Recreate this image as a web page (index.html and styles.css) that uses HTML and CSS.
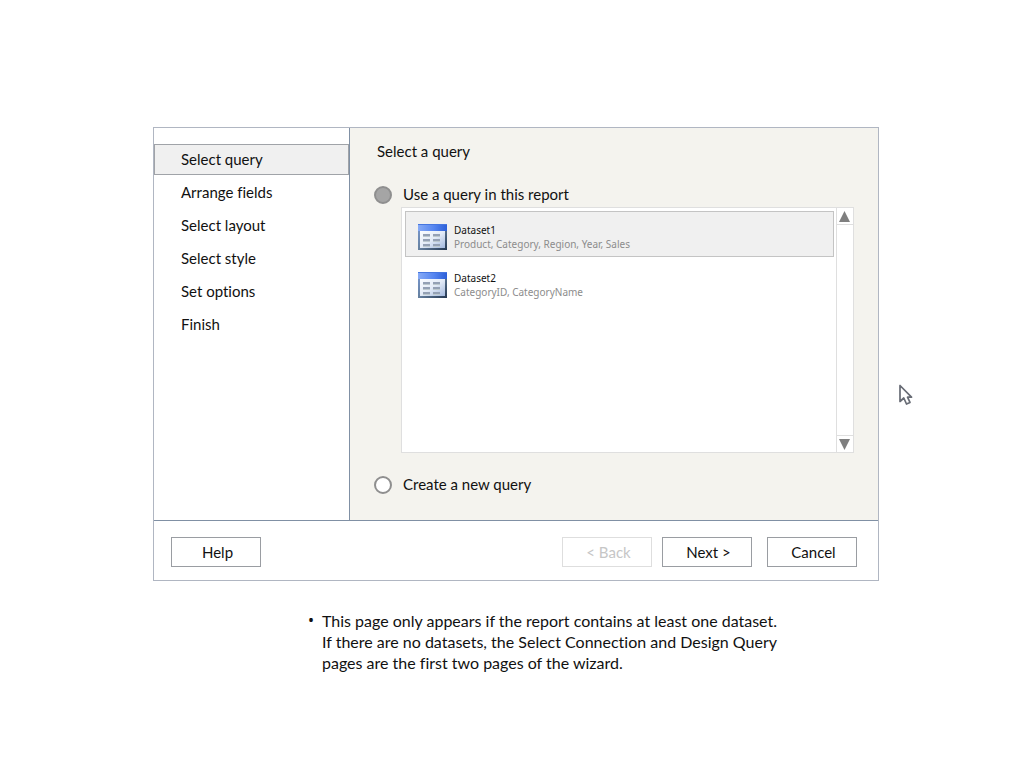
FILE: index.html
```html
<!DOCTYPE html>
<html lang="en">
<head>
<meta charset="utf-8">
<meta name="viewport" content="width=device-width, initial-scale=1">
<title>Report wizard</title>
<link rel="stylesheet" href="styles.css">
</head>
<body>
<svg class="defs" width="0" height="0" aria-hidden="true">
  <defs>
    <linearGradient id="head" x1="0" x2="1"><stop offset="0" stop-color="#86aaf6"/><stop offset=".55" stop-color="#5585f0"/><stop offset="1" stop-color="#2c5fd8"/></linearGradient>
    <linearGradient id="body" x1="0" x2="1" y1="0" y2="1"><stop offset="0" stop-color="#fbfdff"/><stop offset=".5" stop-color="#e3ebf7"/><stop offset="1" stop-color="#a2b8de"/></linearGradient>
    <linearGradient id="edge" x1="0" x2="1" y1="0" y2="1"><stop offset="0" stop-color="#7a9ad6"/><stop offset=".5" stop-color="#65809f"/><stop offset="1" stop-color="#23364f"/></linearGradient>
    <symbol id="table" viewBox="0 0 29 26">
      <rect width="29" height="26" fill="url(#edge)"/>
      <rect width="29" height="7" fill="url(#head)"/>
      <path d="M0 .5h29" stroke="#4676e0"/>
      <rect x="2" y="7" width="25" height="17" fill="url(#body)"/>
      <path d="M5 11h7M15 11h7M5 16h7M15 16h7M5 21h7M15 21h7" stroke="#94a1b5" stroke-width="2"/>
      <path d="M5 12.500h7M15 12.500h7M5 17.500h7M15 17.500h7M5 22.500h7M15 22.500h7" stroke="#bdc9ce" stroke-width="1"/>
    </symbol>
  </defs>
</svg>
<main class="page">
  <form class="wizard">
    <div class="content">
      <nav class="steps">
        <a class="step current" href="#query" aria-current="step">Select query</a>
        <a class="step" href="#fields">Arrange fields</a>
        <a class="step" href="#layout">Select layout</a>
        <a class="step" href="#style">Select style</a>
        <a class="step" href="#options">Set options</a>
        <a class="step" href="#finish">Finish</a>
      </nav>
      <section class="panel">
        <h1 class="title">Select a query</h1>
        <label class="choice"><input class="radio" type="radio" name="source" checked>Use a query in this report</label>
        <div class="list">
          <ul class="items">
            <li class="item selected">
              <svg class="icon" width="29" height="26" aria-hidden="true"><use href="#table"/></svg>
              <div class="text"><div class="name">Dataset1</div><div class="fields">Product, Category, Region, Year, Sales</div></div>
            </li>
            <li class="item">
              <svg class="icon" width="29" height="26" aria-hidden="true"><use href="#table"/></svg>
              <div class="text"><div class="name">Dataset2</div><div class="fields">CategoryID, CategoryName</div></div>
            </li>
          </ul>
          <div class="scrollbar">
            <button class="arrow up" type="button" aria-label="Scroll up"><svg width="12" height="11"><path d="M5.500 0L11 11H0z" fill="#7f7f7f"/></svg></button>
            <button class="arrow down" type="button" aria-label="Scroll down"><svg width="12" height="11"><path d="M0 0h11L5.500 11z" fill="#7f7f7f"/></svg></button>
          </div>
        </div>
        <label class="choice"><input class="radio" type="radio" name="source">Create a new query</label>
      </section>
    </div>
    <footer class="footer">
      <button class="button help" type="button">Help</button>
      <button class="button" type="button" disabled>&lt; Back</button>
      <button class="button" type="button">Next &gt;</button>
      <button class="button cancel" type="button">Cancel</button>
    </footer>
  </form>
  <ul class="notes">
    <li>This page only appears if the report contains at least one dataset.<br>If there are no datasets, the Select Connection and Design Query<br>pages are the first two pages of the wizard.</li>
  </ul>
</main>
<svg class="cursor" width="16" height="22" viewBox="0 0 16 22" aria-hidden="true"><path d="M2 1.500v16l3.800-3.500 2.700 6 3.500-1.600-2.500-5.200h4z" fill="#fff" stroke="#686c75" stroke-width="1.700" stroke-linejoin="round"/></svg>
</body>
</html>
```
FILE: styles.css
```css
* { box-sizing: border-box; }

body {
  margin: 0;
  background: #fff;
  color: #111;
  font: 15px/20px Lato, "Open Sans", sans-serif;
  font-variant-ligatures: none;
}

ul { margin: 0; padding: 0; }

.defs { position: absolute; }

.page { padding: 127px 145px 40px 153px; }

.wizard { border: 1px solid #b0b6c2; }

.content {
  display: grid;
  grid-template-columns: 196px 1fr;
  border-bottom: 1px solid #8090a4;
}

.steps {
  display: flex;
  flex-direction: column;
  gap: 2px;
  padding-top: 16px;
  border-right: 1px solid #8090a4;
}

.step {
  padding: 5px 26px;
  border: 1px solid transparent;
  color: inherit;
  line-height: 19px;
  text-decoration: none;
}

.step.current {
  border-color: #a0a3a8;
  background: #f0f0f0;
}

.panel {
  padding: 13px 24px 25px;
  background: #f4f3ee;
}

.title {
  margin: 0 0 22px 3px;
  font-size: 15px;
  font-weight: 400;
}

.choice {
  display: flex;
  align-items: center;
  gap: 11px;
  height: 22px;
}

.radio {
  appearance: none;
  width: 18px;
  height: 18px;
  margin: 2px 0 0;
  border: 2px solid #8f8f8f;
  border-radius: 50%;
  background: #fff;
}

.radio:checked { background: #a5a5a5; }

.list {
  display: flex;
  min-height: 246px;
  margin: 2px 0 20px 27px;
  border: 1px solid #dfdfdf;
  background: #fff;
}

.items {
  flex: 1;
  display: flex;
  flex-direction: column;
  gap: 2px;
  padding: 3px 2px 3px 3px;
  list-style: none;
}

.item {
  display: flex;
  align-items: center;
  gap: 7px;
  height: 46px;
  padding: 5px 12px 0;
  border: 1px solid transparent;
}

.item.selected {
  border-color: #c4c4c4;
  background: #f0f0f0;
}

.text { font: 10px/14px "Noto Sans", sans-serif; }

.fields { color: #8c8c8c; }

.scrollbar {
  display: flex;
  flex-direction: column;
  justify-content: space-between;
  width: 17px;
  border-left: 1px solid #dfdfdf;
}

.arrow {
  display: grid;
  place-items: center;
  height: 17px;
  padding: 0;
  border: 0 solid #dfdfdf;
  background: #fff;
}

.up { border-bottom-width: 1px; }
.down { border-top-width: 1px; }

.footer {
  display: flex;
  gap: 10px;
  padding: 16px 21px 13px 17px;
}

.button {
  width: 90px;
  height: 30px;
  padding: 0 0 0 3px;
  border: 1px solid #9a9da2;
  background: #fff;
  color: inherit;
  font: inherit;
}

.button:disabled {
  border-color: #dedede;
  color: #c6c6c6;
}

.help { margin-right: auto; }
.cancel { margin-left: 5px; }

.notes {
  margin: 29px 0 0 169px;
  font-size: 16px;
  line-height: 21px;
  list-style: none;
}

.notes li { position: relative; }

.notes li::before {
  content: "•";
  position: absolute;
  left: -14px;
  font-family: "Noto Sans", sans-serif;
}

.cursor {
  position: absolute;
  top: 384px;
  left: 898px;
}
```
